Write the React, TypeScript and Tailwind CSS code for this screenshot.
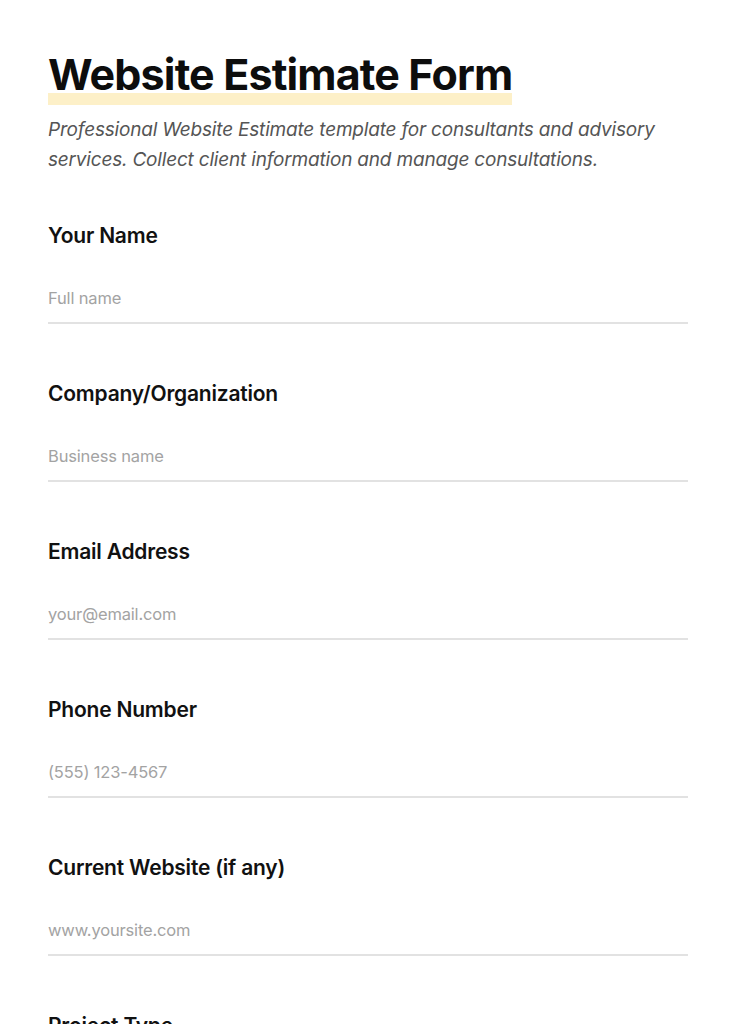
import React from "react";

const fields = [
  { label: "Your Name", placeholder: "Full name" },
  { label: "Company/Organization", placeholder: "Business name" },
  { label: "Email Address", placeholder: "your@email.com" },
  { label: "Phone Number", placeholder: "(555) 123-4567" },
  { label: "Current Website (if any)", placeholder: "www.yoursite.com" },
  { label: "Project Type", placeholder: "Select one" },
];

function Field({ label, placeholder }: { label: string; placeholder: string }) {
  return (
    <div className="flex flex-col">
      <label className="text-[21px] font-semibold leading-[30px] tracking-[-0.01em] text-[#111]">{label}</label>
      <input
        type="text"
        placeholder={placeholder}
        className="mt-[32px] h-[41px] border-b-2 border-[#e2e2e2] bg-transparent pb-[9px] text-[16.5px] tracking-[-0.01em] text-[#222] outline-none placeholder:text-[#a3a3a3]"
      />
    </div>
  );
}

export default function App() {
  return (
    <div className="min-h-screen bg-white px-12 pt-[48px] font-['Inter',sans-serif]">
      <h1 className="inline-block bg-[linear-gradient(#fdf0c8,#fdf0c8)] bg-[length:100%_12px] bg-bottom bg-no-repeat pb-[5px] text-[43px] font-bold leading-[52px] tracking-[-0.02em] text-[#0d0d0d]">
        Website Estimate Form
      </h1>
      <p className="mt-[10px] text-[19px] italic leading-[30px] tracking-[-0.01em] text-[#555]">
        Professional Website Estimate template for consultants and advisory services. Collect client information and manage consultations.
      </p>
      <div className="mt-[46px] flex flex-col gap-[55px]">
        {fields.map((f) => (
          <Field key={f.label} {...f} />
        ))}
      </div>
    </div>
  );
}
